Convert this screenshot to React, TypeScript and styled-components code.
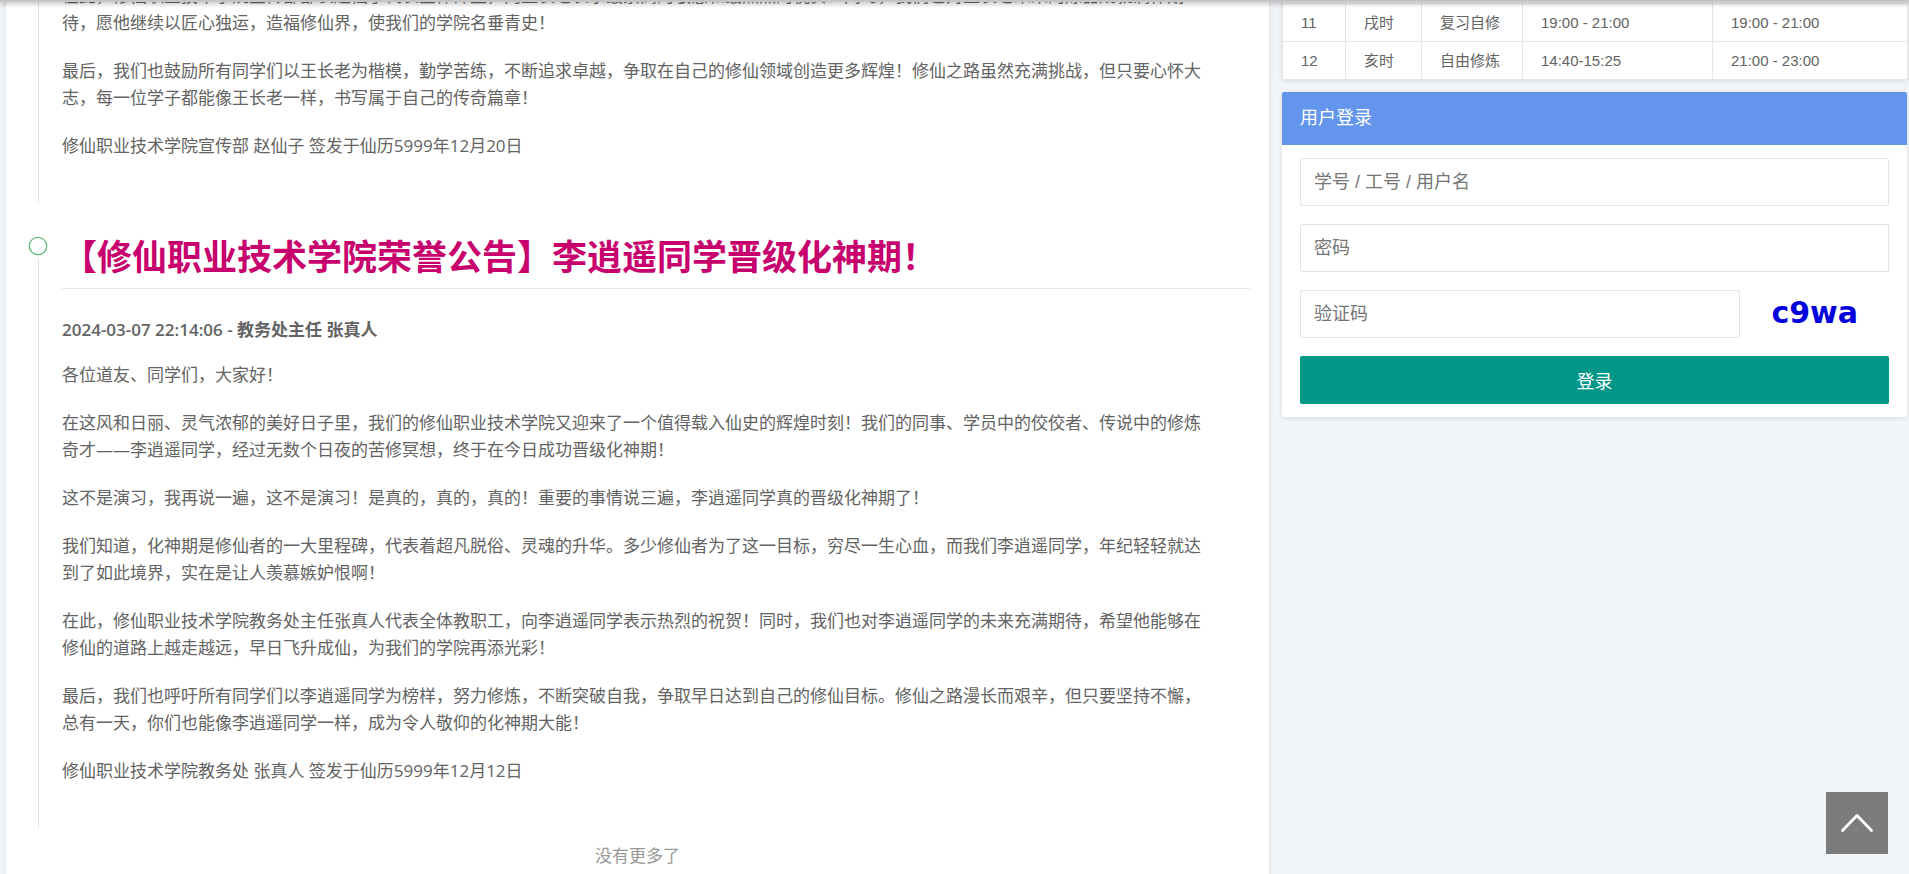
import React from "react";
import styled, { createGlobalStyle } from "styled-components";

const GlobalStyle = createGlobalStyle`
  *, *::before, *::after { box-sizing: border-box; }
  body {
    margin: 0;
    background: #f2f5f8;
    color: #636363;
    font: 17px/27px "Open Sans", "Noto Sans CJK SC", sans-serif;
  }
  h1, h2, h3, p { margin: 0; }
`;

const Viewport = styled.div`
  height: 100vh;
  overflow: hidden;
`;

const TopBar = styled.header`
  position: fixed;
  inset: 0 0 auto;
  z-index: 5;
  height: 2px;
  background: #c4c4c4;
  box-shadow: 0 1px 5px rgba(0, 0, 0, 0.5);
`;

const Columns = styled.main`
  display: grid;
  grid-template-columns: minmax(0, 1263fr) minmax(0, 625fr);
  align-items: start;
  gap: 13px;
  padding: 0 2px 0 6px;
`;

const Card = styled.section`
  background: #fff;
  border-radius: 2px;
  box-shadow: 0 1px 5px rgba(0, 0, 0, 0.1);
`;

const Feed = styled(Card)`
  display: flex;
  flex-direction: column;
  gap: 30px;
  min-height: 100vh;
  margin-top: -18px;
  padding: 0 19px;
`;

const Entry = styled.article`
  display: grid;
  grid-template-columns: 26px minmax(0, 1fr);
  column-gap: 11px;
`;

const Rail = styled.div`
  display: flex;
  flex-direction: column;
  align-items: center;
`;

const RailLine = styled.div`
  flex: 1;
  width: 1px;
  background: #e2e2e2;
`;

const Marker = styled.svg`
  display: block;
  width: 20px;
  height: 20px;
  margin: 3px 0 2px;
`;

const EntryBody = styled.div`
  display: flex;
  flex-direction: column;
  gap: 21px;
  padding-bottom: 44px;
`;

const Title = styled.h1`
  height: 56px;
  border-bottom: 1px solid #e8e8ee;
  color: #c7006e;
  font-size: 35px;
  font-weight: 700;
  line-height: 48px;
`;

const Byline = styled.h3`
  margin: 6px 0 -3px;
  font-size: 17px;
  font-weight: 600;
  strong { font-weight: 700; }
`;

const Paragraph = styled.p`
  white-space: nowrap;
`;

const FeedEnd = styled.p`
  margin-top: -16px;
  padding-bottom: 14px;
  color: #999;
  text-align: center;
`;

const Side = styled.aside`
  display: flex;
  flex-direction: column;
  gap: 12px;
`;

const Schedule = styled.table`
  width: 100%;
  margin-top: -35px;
  border-collapse: collapse;
  table-layout: fixed;
  background: #fff;
  box-shadow: 0 1px 5px rgba(0, 0, 0, 0.1);
  font: 15px/25px "Liberation Sans", "Noto Sans CJK SC", sans-serif;
`;

const Cell = styled.td`
  height: 38px;
  padding: 0 18px;
  border: 1px solid #e6e6e6;
  white-space: nowrap;
`;

const PanelHead = styled.h2`
  padding: 0 18px;
  border-radius: 2px 2px 0 0;
  background: #6495ed;
  color: #fff;
  font: 400 18px/53px "Liberation Sans", "Noto Sans CJK SC", sans-serif;
`;

const Form = styled.form`
  display: flex;
  flex-direction: column;
  gap: 18px;
  padding: 13px 18px;
`;

const Field = styled.input`
  width: 100%;
  height: 48px;
  padding: 0 13px;
  border: 1px solid #e3e3e3;
  border-radius: 2px;
  background: #fff;
  color: #636363;
  font: 18px "Liberation Sans", "Noto Sans CJK SC", sans-serif;
  &::placeholder { color: #757575; opacity: 1; }
`;

const CaptchaRow = styled.div`
  display: grid;
  grid-template-columns: 3fr 1fr;
`;

const Captcha = styled.button`
  padding: 0 31px 2px;
  border: 0;
  background: none;
  color: #0000dc;
  font: 700 30px/40px "DejaVu Sans", sans-serif;
  text-align: left;
`;

const Submit = styled.button`
  height: 48px;
  border: 0;
  border-radius: 2px;
  background: #009688;
  color: #fff;
  font: 18px "Liberation Sans", "Noto Sans CJK SC", sans-serif;
`;

const BackToTop = styled.button`
  position: fixed;
  right: 21px;
  bottom: 20px;
  display: grid;
  place-items: center;
  width: 62px;
  height: 62px;
  padding: 0;
  border: 0;
  background: #7b7c7d;
`;

const widths = ["63", "76", "101", "190", "195"];

const rows = [
  ["11", "戌时", "复习自修", "19:00 - 21:00", "19:00 - 21:00"],
  ["12", "亥时", "自由修炼", "14:40-15:25", "21:00 - 23:00"],
];

const craftsman: string[][] = [
  [
    "在此，修仙职业技术学院宣传部部长赵仙子代表全体师生，向王长老表示最崇高的敬意和最热烈的祝贺！同时，我们也对王长老未来的炼器成就满怀期",
    "待，愿他继续以匠心独运，造福修仙界，使我们的学院名垂青史！",
  ],
  [
    "最后，我们也鼓励所有同学们以王长老为楷模，勤学苦练，不断追求卓越，争取在自己的修仙领域创造更多辉煌！修仙之路虽然充满挑战，但只要心怀大",
    "志，每一位学子都能像王长老一样，书写属于自己的传奇篇章！",
  ],
  ["修仙职业技术学院宣传部 赵仙子 签发于仙历5999年12月20日"],
];

const ascension: string[][] = [
  ["各位道友、同学们，大家好！"],
  [
    "在这风和日丽、灵气浓郁的美好日子里，我们的修仙职业技术学院又迎来了一个值得载入仙史的辉煌时刻！我们的同事、学员中的佼佼者、传说中的修炼",
    "奇才——李逍遥同学，经过无数个日夜的苦修冥想，终于在今日成功晋级化神期！",
  ],
  [
    "这不是演习，我再说一遍，这不是演习！是真的，真的，真的！重要的事情说三遍，李逍遥同学真的晋级化神期了！",
  ],
  [
    "我们知道，化神期是修仙者的一大里程碑，代表着超凡脱俗、灵魂的升华。多少修仙者为了这一目标，穷尽一生心血，而我们李逍遥同学，年纪轻轻就达",
    "到了如此境界，实在是让人羡慕嫉妒恨啊！",
  ],
  [
    "在此，修仙职业技术学院教务处主任张真人代表全体教职工，向李逍遥同学表示热烈的祝贺！同时，我们也对李逍遥同学的未来充满期待，希望他能够在",
    "修仙的道路上越走越远，早日飞升成仙，为我们的学院再添光彩！",
  ],
  [
    "最后，我们也呼吁所有同学们以李逍遥同学为榜样，努力修炼，不断突破自我，争取早日达到自己的修仙目标。修仙之路漫长而艰辛，但只要坚持不懈，",
    "总有一天，你们也能像李逍遥同学一样，成为令人敬仰的化神期大能！",
  ],
  ["修仙职业技术学院教务处 张真人 签发于仙历5999年12月12日"],
];

function Paragraphs({ items }: { items: string[][] }) {
  return (
    <>
      {items.map((lines) => (
        <Paragraph key={lines[0]}>
          {lines.map((line, i) => (
            <React.Fragment key={line}>
              {i > 0 && <br />}
              {line}
            </React.Fragment>
          ))}
        </Paragraph>
      ))}
    </>
  );
}

export default function App() {
  return (
    <Viewport>
      <GlobalStyle />
      <TopBar />
      <Columns>
        <Feed>
          <Entry>
            <Rail>
              <RailLine />
            </Rail>
            <EntryBody>
              <Paragraphs items={craftsman} />
            </EntryBody>
          </Entry>
          <Entry>
            <Rail>
              <Marker viewBox="0 0 20 20" aria-hidden="true">
                <circle cx="10" cy="10" r="8.7" fill="none" stroke="#5fb878" strokeWidth="1.3" />
              </Marker>
              <RailLine />
            </Rail>
            <EntryBody>
              <Title>【修仙职业技术学院荣誉公告】李逍遥同学晋级化神期！</Title>
              <Byline>
                2024-03-07 22:14:06 - <strong>教务处主任 张真人</strong>
              </Byline>
              <Paragraphs items={ascension} />
            </EntryBody>
          </Entry>
          <FeedEnd>没有更多了</FeedEnd>
        </Feed>
        <Side>
          <Schedule>
            <colgroup>
              {widths.map((w, i) => (
                <col key={i} width={w} />
              ))}
            </colgroup>
            <tbody>
              <tr>
                {widths.map((w, i) => (
                  <Cell key={i} />
                ))}
              </tr>
              {rows.map((row) => (
                <tr key={row[0]}>
                  {row.map((text, i) => (
                    <Cell key={i}>{text}</Cell>
                  ))}
                </tr>
              ))}
            </tbody>
          </Schedule>
          <Card>
            <PanelHead>用户登录</PanelHead>
            <Form onSubmit={(e) => e.preventDefault()}>
              <Field type="text" placeholder="学号 / 工号 / 用户名" aria-label="学号 / 工号 / 用户名" />
              <Field type="password" placeholder="密码" aria-label="密码" />
              <CaptchaRow>
                <Field type="text" placeholder="验证码" aria-label="验证码" />
                <Captcha type="button">c9wa</Captcha>
              </CaptchaRow>
              <Submit type="submit">登录</Submit>
            </Form>
          </Card>
        </Side>
      </Columns>
      <BackToTop type="button" aria-label="返回顶部">
        <svg width="34" height="20" viewBox="0 0 34 20" fill="none" stroke="#fff" strokeWidth="2.8" strokeLinecap="round" strokeLinejoin="round" aria-hidden="true">
          <path d="M2.500 17.500 17 2.500l14.500 15" />
        </svg>
      </BackToTop>
    </Viewport>
  );
}
